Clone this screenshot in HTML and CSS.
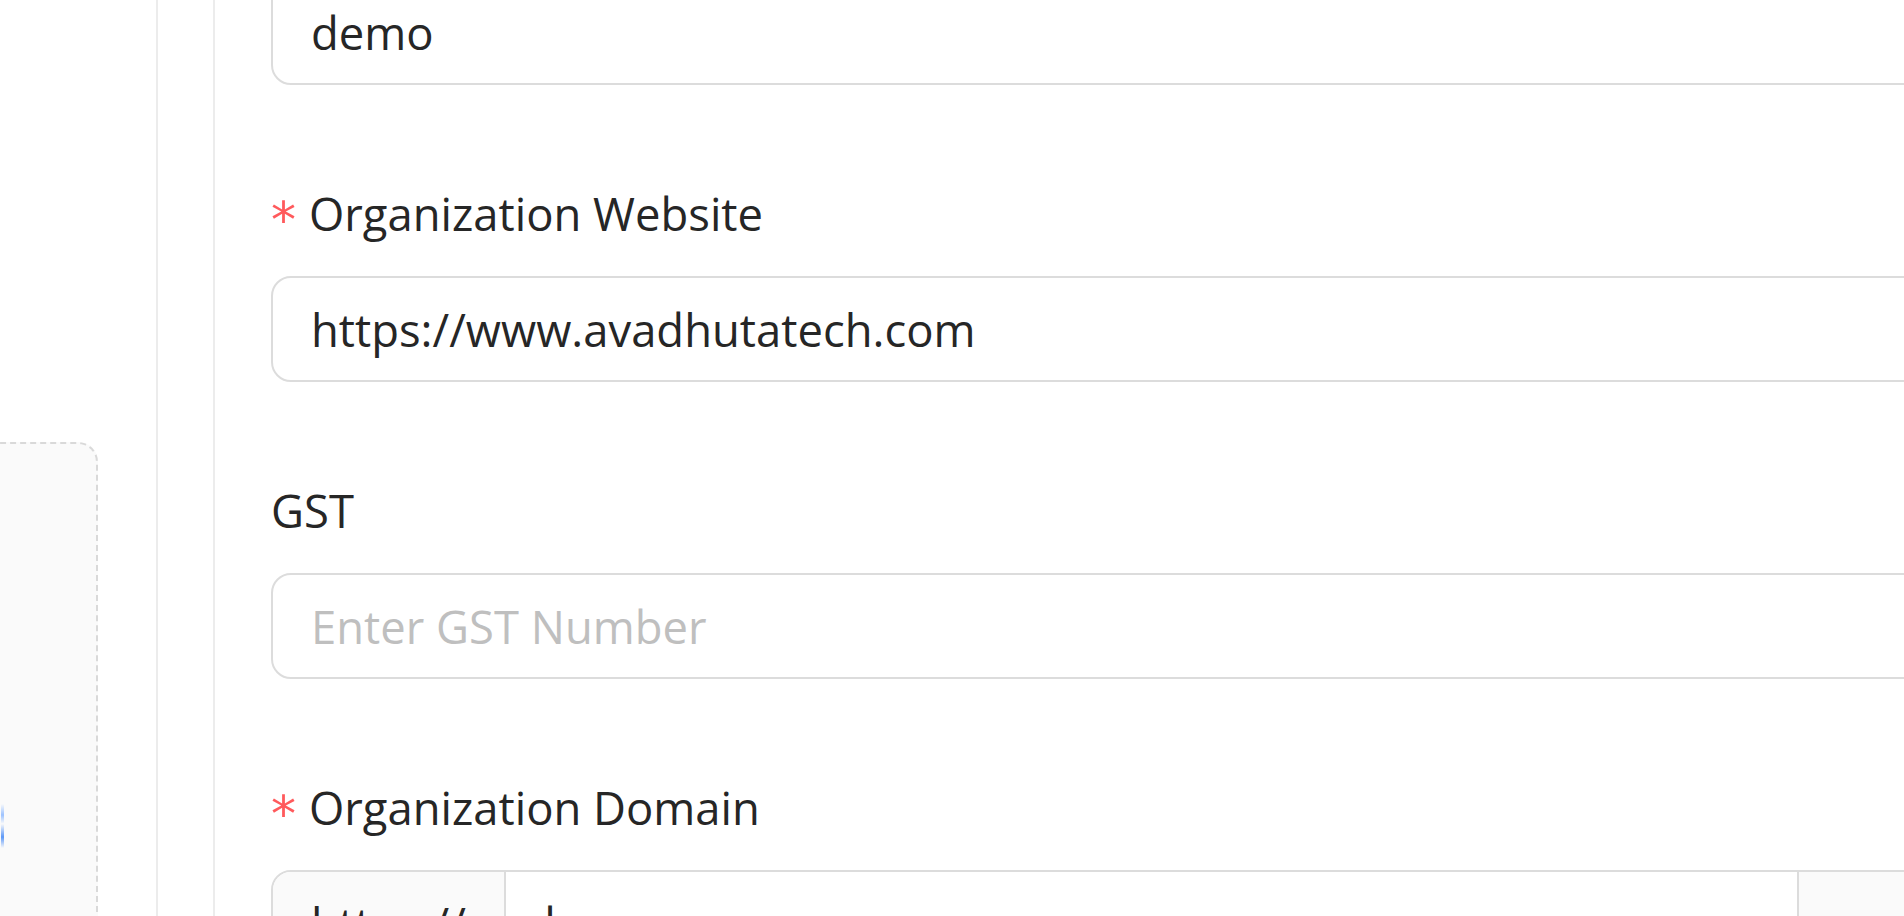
FILE: index.html
```html
<!DOCTYPE html>
<html lang="en">
<head>
<meta charset="utf-8">
<title>Organization Settings</title>
<link rel="stylesheet" href="styles.css">
</head>
<body>
<div class="page">
  <aside class="side">
    <div class="upload">
      <span class="upload-mark"></span>
    </div>
  </aside>
  <div class="gutter"></div>
  <main class="card">
    <form class="form">
      <div class="item first">
        <div class="input">demo</div>
      </div>
      <div class="item">
        <label class="label"><span class="req">*</span>Organization Website</label>
        <div class="input">https://www.avadhutatech.com</div>
      </div>
      <div class="item">
        <label class="label">GST</label>
        <div class="input placeholder">Enter GST Number</div>
      </div>
      <div class="item">
        <label class="label"><span class="req">*</span>Organization Domain</label>
        <div class="group">
          <span class="addon">https://</span>
          <div class="group-input">demo</div>
          <span class="addon addon-right">.avadhutatech.com</span>
        </div>
      </div>
    </form>
  </main>
</div>
</body>
</html>
```

FILE: styles.css
```css
html, body {
  margin: 0;
  padding: 0;
  background: #ffffff;
}
body {
  width: 1904px;
  height: 916px;
  overflow: hidden;
  font-family: "Open Sans", "Noto Sans", sans-serif;
  color: #1f1f1f;
}
.page {
  display: flex;
  height: 916px;
}
.side {
  width: 156px;
  flex: none;
  border-right: 2px solid #ececec;
  overflow: hidden;
}
.upload {
  margin-top: 442px;
  margin-left: -40px;
  width: 138px;
  height: 600px;
  box-sizing: border-box;
  background: #fafafa;
  border: 2px dashed #d9d9d9;
  border-radius: 20px;
  padding-top: 360px;
  padding-left: 39px;
}
.upload-mark {
  display: block;
  width: 3px;
  height: 44px;
  background: linear-gradient(#ffffff00, #9cc2ff 25%, #ffffff00 45%, #5b97f7 75%, #ffffff00);
}
.gutter {
  width: 55px;
  flex: none;
}
.card {
  flex: 1;
  border-left: 2px solid #ececec;
  padding-left: 56px;
  overflow: hidden;
}
.form {
  width: 1800px;
  display: flex;
  flex-direction: column;
}
.item {
  display: flex;
  flex-direction: column;
  margin-bottom: 93px;
}
.item.first {
  margin-top: -21px;
}
.label {
  display: block;
  height: 70px;
  line-height: 70px;
  padding-bottom: 28px;
  font-size: 45.4px;
  color: #262626;
  white-space: nowrap;
}
.req {
  display: inline-block;
  color: #ff5a5c;
  font-family: "DejaVu Sans", sans-serif;
  font-size: 50px;
  line-height: 70px;
  width: 38px;
  vertical-align: -6px;
}
.input {
  height: 106px;
  box-sizing: border-box;
  border: 2px solid #dcdcdc;
  border-radius: 20px;
  padding: 0 38px;
  display: flex;
  align-items: center;
  font-size: 45.4px;
  color: #262626;
  white-space: nowrap;
}
.input.placeholder {
  color: #bfbfbf;
}
.group {
  height: 106px;
  box-sizing: border-box;
  border: 2px solid #dcdcdc;
  border-radius: 20px;
  display: flex;
  overflow: hidden;
  font-size: 45.4px;
  white-space: nowrap;
}
.addon {
  width: 233px;
  flex: none;
  box-sizing: border-box;
  background: #fafafa;
  border-right: 2px solid #dcdcdc;
  padding: 0 38px;
  display: flex;
  align-items: center;
  color: #262626;
}
.group-input {
  width: 1293px;
  flex: none;
  box-sizing: border-box;
  border-right: 2px solid #dcdcdc;
  padding: 0 22px;
  display: flex;
  align-items: center;
  color: #262626;
}
.addon-right {
  width: auto;
  flex: 1;
  border-right: none;
}
```
